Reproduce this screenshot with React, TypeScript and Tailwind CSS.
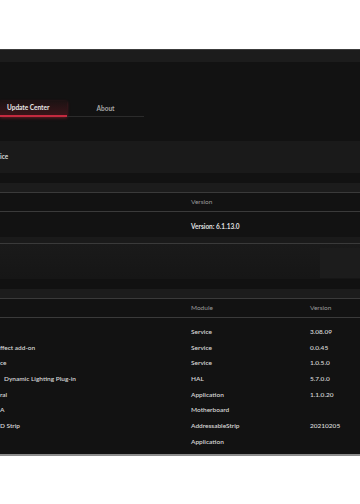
import React from "react";

interface ModuleRow {
    name: string;
    nameOffset?: string;
    module: string;
    version: string;
}

const modules: ModuleRow[] = [
    { name: "", module: "Service", version: "3.08.09" },
    { name: "ffect add-on", module: "Service", version: "0.0.45" },
    { name: "ce", module: "Service", version: "1.0.5.0" },
    { name: "Dynamic Lighting Plug-in", nameOffset: "pl-[4px]", module: "HAL", version: "5.7.0.0" },
    { name: "ral", module: "Application", version: "1.1.0.20" },
    { name: "A", module: "Motherboard", version: "" },
    { name: "D Strip", module: "AddressableStrip", version: "20210205" },
    { name: "", module: "Application", version: "" },
];

function SectionBar() {
    return <div className="h-[10px] border-b border-[#3a3a3a] bg-[#1c1c1c]" />;
}

export default function App() {
    return (
        <div className="flex h-[504px] w-[360px] flex-col overflow-hidden bg-white font-['Lato',sans-serif] text-[6.5px]">
            <div className="h-[49px] shrink-0 bg-white" />

            <div className="flex h-[407px] shrink-0 flex-col overflow-hidden border-t border-b-2 border-t-[#3c3c3c] border-b-[#8d8d8d] bg-[#121212]">
                {/* title bar */}
                <div className="h-[12px] shrink-0 bg-[#1c1c1c]" />

                {/* tabs */}
                <div className="mt-[39px] flex h-[16px] shrink-0">
                    <div className="flex w-[67px] items-center border-b-2 border-[#c42a3f] bg-gradient-to-b from-[#1c1213] to-[#3a1419] pl-[7px] font-bold text-[#e8e8e8] shadow-[0_1px_3px_rgba(200,40,60,0.45)]">
                        Update Center
                    </div>
                    <div className="flex w-[77px] items-center justify-center border-b border-[#2b2b2b] font-bold text-[#a8a8a8]">
                        About
                    </div>
                </div>

                {/* service block */}
                <div className="mt-[24px] flex h-[32px] shrink-0 items-center bg-[#1a1a1a] font-bold text-[#d8d8d8]">
                    ice
                </div>

                <div className="mt-[10px] shrink-0">
                    <SectionBar />
                    <div className="grid h-[19px] grid-cols-[191px_1fr] items-center border-b border-[#3a3a3a] text-[#9a9a9a]">
                        <span />
                        <span>Version</span>
                    </div>
                    <div className="grid h-[25px] grid-cols-[191px_1fr] items-center font-bold text-[#e0e0e0]">
                        <span />
                        <span className="pt-[5px]">Version: 6.1.13.0</span>
                    </div>
                    <div className="h-[7px] border-b border-[#3a3a3a] bg-[#1a1a1a]" />
                </div>

                {/* empty panel */}
                <div className="flex h-[35px] shrink-0 justify-end bg-gradient-to-b from-[#1a1a1a] to-[#161616]">
                    <div className="mt-[4px] h-[30px] w-[40px] bg-[#1c1c1c]" />
                </div>
                <div className="h-[10px] shrink-0 bg-[#111111]" />

                {/* modules */}
                <div className="shrink-0">
                    <SectionBar />
                    <div className="grid h-[19px] grid-cols-[191px_119px_1fr] items-center border-b border-[#3a3a3a] text-[#9a9a9a]">
                        <span />
                        <span>Module</span>
                        <span>Version</span>
                    </div>
                    <div className="pt-[6px]">
                        {modules.map((m, i) => (
                            <div
                                key={i}
                                className="grid h-[15.7px] grid-cols-[191px_119px_1fr] items-center font-semibold text-[#d6d6d6]"
                            >
                                <span className={m.nameOffset ?? ""}>{m.name}</span>
                                <span>{m.module}</span>
                                <span>{m.version}</span>
                            </div>
                        ))}
                    </div>
                </div>
            </div>

            <div className="flex-1 bg-white" />
        </div>
    );
}
